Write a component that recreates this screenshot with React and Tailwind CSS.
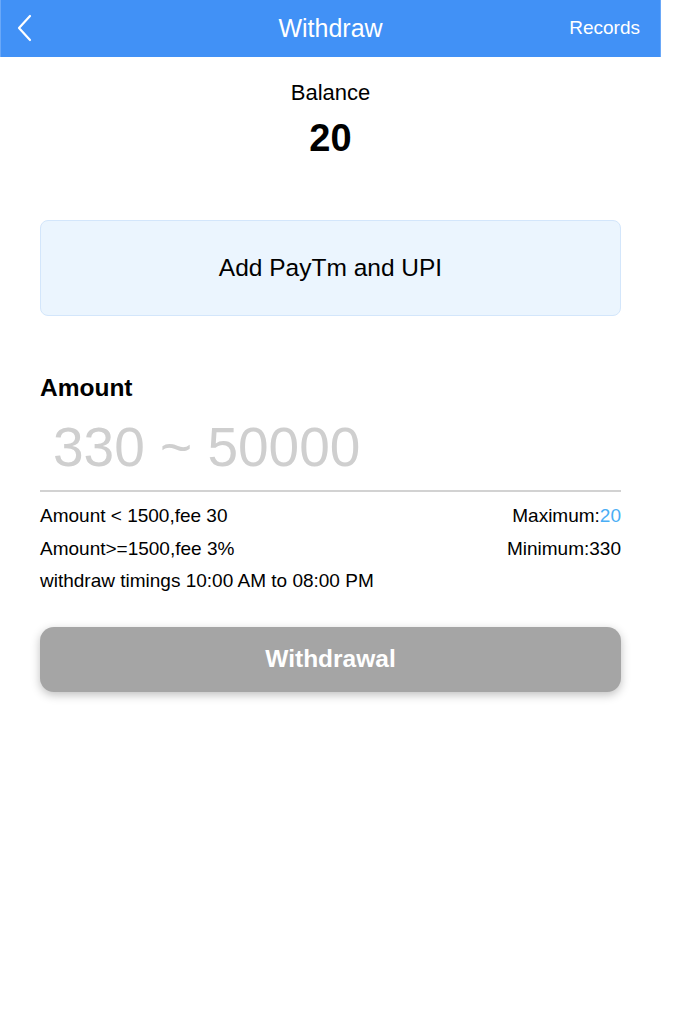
import { useState } from "react";

const FEES = [
  { left: "Amount < 1500,fee 30", right: "Maximum:", value: "20" },
  { left: "Amount>=1500,fee 3%", right: "Minimum:330" },
  { left: "withdraw timings 10:00 AM to 08:00 PM" },
];

export default function App() {
  const [amount, setAmount] = useState("");

  return (
    <div
      className="w-[661px] min-h-[1024px] bg-white text-black"
      style={{ fontFamily: '"Liberation Sans", Arial, sans-serif' }}
    >
      <header className="relative h-[57px] bg-[#4191f6] border-x border-[#6aa8f8] flex items-center justify-center">
        <button className="absolute left-[14px] top-[13px] text-white">
          <svg width="22" height="30" viewBox="0 0 22 30" fill="none">
            <path d="M15 3 L4 15 L15 27" stroke="white" strokeWidth="2.2" strokeLinecap="round" strokeLinejoin="round" />
          </svg>
        </button>
        <h1 className="text-[25px] text-white leading-none">Withdraw</h1>
        <span className="absolute right-[20px] top-[18px] text-[19px] text-white leading-none">Records</span>
      </header>

      <main className="px-[40px]">
        <div className="flex flex-col items-center pt-[23px]">
          <p className="text-[22px] leading-[26px]">Balance</p>
          <p className="text-[38px] font-bold leading-[44px] mt-[10px]">20</p>
        </div>

        <button className="mt-[60px] w-full h-[96px] rounded-[8px] bg-[#ebf5fe] border border-[#d3e6fb] text-[24.5px] flex items-center justify-center">
          Add PayTm and UPI
        </button>

        <section className="mt-[57px]">
          <h2 className="text-[24.5px] font-bold leading-[30px]">Amount</h2>
          <input
            value={amount}
            onChange={(e) => setAmount(e.target.value)}
            placeholder="330 ~ 50000"
            className="block w-full h-[89px] pl-[13px] text-[55px] leading-none outline-none placeholder:text-[#cfcfcf] border-b-2 border-[#d2d2d2]"
          />

          <div className="mt-[8px] text-[19px] leading-[32.5px]">
            {FEES.map((row) => (
              <div key={row.left} className="flex justify-between">
                <span>{row.left}</span>
                {row.right && (
                  <span>
                    {row.right}
                    {row.value && <span className="text-[#4aaef5]">{row.value}</span>}
                  </span>
                )}
              </div>
            ))}
          </div>
        </section>

        <button className="mt-[29px] w-full h-[65px] rounded-[14px] bg-[#a5a5a5] text-white text-[24.5px] font-bold shadow-[0_3px_10px_rgba(0,0,0,0.25)]">
          Withdrawal
        </button>
      </main>
    </div>
  );
}
